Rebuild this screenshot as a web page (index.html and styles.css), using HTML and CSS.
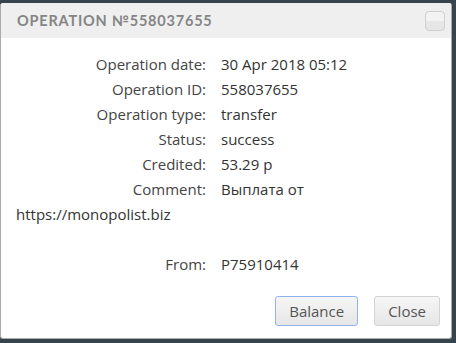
FILE: index.html
```html
<!DOCTYPE html>
<html lang="en">
<head>
  <meta charset="UTF-8">
  <meta name="viewport" content="width=device-width, initial-scale=1.0">
  <title>Operation</title>
  <link rel="stylesheet" href="styles.css">
</head>
<body>
  <div class="dialog">
    <div class="dialog-header">
      <span class="dialog-title">Operation №558037655</span>
      <button class="dialog-close" aria-label="Close"></button>
    </div>
    <div class="dialog-body">
      <div class="row"><span class="label">Operation date:</span><span class="value">30 Apr 2018 05:12</span></div>
      <div class="row"><span class="label">Operation ID:</span><span class="value">558037655</span></div>
      <div class="row"><span class="label">Operation type:</span><span class="value">transfer</span></div>
      <div class="row"><span class="label">Status:</span><span class="value">success</span></div>
      <div class="row"><span class="label">Credited:</span><span class="value">53.29 р</span></div>
      <div class="row"><span class="label">Comment:</span><span class="value">Выплата от https://monopolist.biz</span></div>
      <div class="row">&nbsp;</div>
      <div class="row"><span class="label">From:</span><span class="value">P75910414</span></div>
    </div>
    <div class="dialog-footer">
      <button class="btn btn-focus">Balance</button>
      <button class="btn">Close</button>
    </div>
  </div>
</body>
</html>
```

FILE: styles.css
```css
* {
  box-sizing: border-box;
}
body {
  margin: 0;
  background: #36454d;
  font-family: 'Open Sans', sans-serif;
}
.dialog {
  margin-top: 3px;
  width: 452px;
  height: 336px;
  background: white;
  border: 1px solid #aaa;
  border-top: none;
  border-radius: 3px;
  overflow: hidden;
  display: flex;
  flex-direction: column;
}
.dialog-header {
  height: 35px;
  background: #efefef;
  display: flex;
  align-items: center;
  justify-content: space-between;
  padding: 0 6px 0 16px;
}
.dialog-title {
  font-family: 'Lato', sans-serif;
  font-weight: 700;
  font-size: 14.5px;
  letter-spacing: 0.8px;
  text-transform: uppercase;
  color: #858585;
}
.dialog-close {
  width: 20px;
  height: 20px;
  border: 1px solid #cfcfcf;
  border-radius: 4px;
  background: linear-gradient(#f3f3f3 50%, #e6e6e6 50%);
  padding: 0;
}
.dialog-body {
  padding: 14px 16px 0 15px;
  font-size: 15px;
  color: #333;
}
.row {
  line-height: 25px;
}
.label {
  display: inline-block;
  width: 190px;
  text-align: right;
  color: #444;
}
.value {
  margin-left: 15px;
}
.dialog-footer {
  display: flex;
  justify-content: flex-end;
  gap: 16px;
  padding: 19px 11px 0 0;
}
.btn {
  height: 30px;
  padding: 0 13px;
  border: 1px solid #d3d3d3;
  border-radius: 3px;
  background: linear-gradient(#f6f6f6, #e6e6e6);
  font-family: 'Open Sans', sans-serif;
  font-size: 15px;
  color: #555;
}
.btn-focus {
  border-color: #8fb3f0;
}
```
